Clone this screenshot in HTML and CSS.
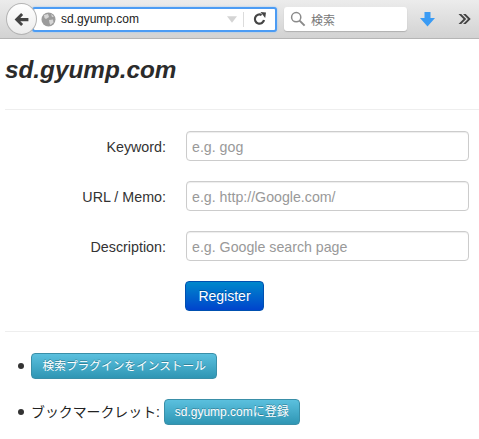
FILE: index.html
```html
<!DOCTYPE html>
<html lang="ja">
<head>
  <meta charset="UTF-8">
  <meta name="viewport" content="width=device-width, initial-scale=1.0">
  <title>sd.gyump.com</title>
  <link rel="stylesheet" href="styles.css">
</head>
<body>
  <div class="toolbar">
    <div class="back-btn">
      <svg width="15" height="13" viewBox="0 0 18 16"><path d="M8.5 0 L0.5 8 L8.5 16 L11 13.5 L7.5 10 H17.5 V6 H7.5 L11 2.5 Z" fill="#444"/></svg>
    </div>
    <div class="url-bar">
      <svg class="globe" width="15" height="15" viewBox="0 0 15 15">
        <circle cx="7.5" cy="7.5" r="7" fill="#9b9b9b"/>
        <path d="M3 3 L7 2 L8 5 L5 7 L3.5 6 Z M8 8 L12 7.5 L12.5 10.5 L9.5 13 L8.5 11 Z M10 2 L13 4.5 L11 5 Z" fill="#d6d6d6"/>
      </svg>
      <span class="url-text">sd.gyump.com</span>
      <svg class="drop" width="10" height="7" viewBox="0 0 12 8"><path d="M0 0 H12 L6 8 Z" fill="#d4d4d4"/></svg>
      <span class="url-sep"></span>
      <svg class="reload" width="14" height="14" viewBox="0 0 14 14">
        <path d="M11 8 A4.6 4.6 0 1 1 8.6 3" fill="none" stroke="#444" stroke-width="2.2"/>
        <path d="M7.5 0 L13 0.6 L12.2 6 Z" fill="#444"/>
      </svg>
    </div>
    <div class="search-bar">
      <svg width="16" height="16" viewBox="0 0 16 16">
        <circle cx="6.2" cy="6.2" r="4.6" fill="none" stroke="#8a8a8a" stroke-width="1.5"/>
        <path d="M9.6 9.6 L14.6 14.6" stroke="#8a8a8a" stroke-width="2"/>
      </svg>
      <span>検索</span>
    </div>
    <svg class="download" width="15" height="15" viewBox="0 0 15 15"><path d="M4.5 0 H10.5 V6 H15 L7.5 14.5 L0 6 H4.5 Z" fill="#3a9bf4"/></svg>
    <svg class="more" width="13" height="10" viewBox="0 0 13 10">
      <path d="M0.5 0 L5.5 5 L0.5 10 H3.2 L8.2 5 L3.2 0 Z M5 0 L10 5 L5 10 H7.7 L12.7 5 L7.7 0 Z" fill="#444"/>
    </svg>
  </div>

  <div class="page">
    <h1>sd.gyump.com</h1>
    <hr>
    <form class="reg-form">
      <div class="form-row">
        <label>Keyword:</label>
        <input type="text" placeholder="e.g. gog">
      </div>
      <div class="form-row">
        <label>URL / Memo:</label>
        <input type="text" placeholder="e.g. http://Google.com/">
      </div>
      <div class="form-row">
        <label>Description:</label>
        <input type="text" placeholder="e.g. Google search page">
      </div>
      <div class="form-actions">
        <button type="button" class="btn btn-primary">Register</button>
      </div>
    </form>
    <hr>
    <ul class="links">
      <li><a class="btn btn-info">検索プラグインをインストール</a></li>
      <li><span class="bm-label">ブックマークレット: </span><a class="btn btn-info btn-latin">sd.gyump.comに登録</a></li>
    </ul>
  </div>
</body>
</html>
```

FILE: styles.css
```css
body {
  font-family: "Liberation Sans", "Noto Sans CJK JP", sans-serif;
  color: #333;
  background-color: #fff;
  margin: 0;
  overflow: hidden;
}

.toolbar {
  height: 38px;
  display: flex;
  align-items: center;
  position: relative;
  background: linear-gradient(#ececec, #d2d2d2);
  border-bottom: 1px solid #b5b5b5;
  padding-left: 32px;
}

.back-btn {
  position: absolute;
  left: 6px;
  top: 3px;
  width: 29px;
  height: 30px;
  border: 1px solid #b4b4b4;
  border-radius: 50%;
  background: linear-gradient(#ffffff, #ececec);
  display: flex;
  align-items: center;
  justify-content: center;
  z-index: 1;
}

.url-bar {
  width: 234px;
  height: 21px;
  background: #fff;
  border: 2px solid #4c9cf4;
  border-radius: 3px;
  box-shadow: 0 0 2px #8fc2f8;
  display: flex;
  align-items: center;
  padding-left: 7px;
}

.globe {
  flex: none;
}

.url-text {
  font-size: 12px;
  color: #222;
  margin-left: 5px;
  flex: 1;
}

.drop {
  flex: none;
}

.url-sep {
  width: 1px;
  height: 15px;
  background: #dcdcdc;
  margin-left: 6px;
}

.reload {
  flex: none;
  margin: 0 8px 0 9px;
}

.search-bar {
  width: 117px;
  height: 24px;
  margin-left: 7px;
  background: #fff;
  border-radius: 3px;
  box-shadow: 0 1px 1px #b0b0b0;
  display: flex;
  align-items: center;
  gap: 5px;
  padding-left: 6px;
  font-size: 12px;
  color: #777;
}

.download {
  margin-left: 13px;
}

.more {
  margin-left: 23px;
}

.page {
  padding: 0 0 0 5px;
}

h1 {
  font-size: 24.3px;
  font-style: italic;
  font-weight: bold;
  color: #2b2b2b;
  line-height: 30px;
  margin: 16px 0 24px;
}

hr {
  height: 1px;
  border: 0;
  background: #eeeeee;
  margin: 0;
}

.reg-form {
  padding-top: 21px;
  padding-bottom: 20px;
}

.form-row {
  display: flex;
  align-items: center;
  margin-bottom: 20px;
}

.form-row label {
  width: 161px;
  text-align: right;
  font-size: 14.3px;
  flex: none;
  padding-top: 1px;
}

.form-row input {
  margin-left: 20px;
  width: 283px;
  height: 30px;
  box-sizing: border-box;
  border: 1px solid #cccccc;
  border-radius: 4px;
  padding: 2px 5px 0;
  font-family: inherit;
  font-size: 14.2px;
  box-shadow: inset 0 1px 1px rgba(0, 0, 0, 0.075);
}

.form-row input::placeholder {
  color: #999;
}

.form-actions {
  padding-left: 180px;
}

.btn {
  display: inline-block;
  box-sizing: border-box;
  border-radius: 4px;
  color: #fff;
  font-family: inherit;
  text-shadow: 0 -1px 0 rgba(0, 0, 0, 0.25);
}

.btn-primary {
  width: 79px;
  height: 30px;
  font-size: 14px;
  padding: 0;
  border: 1px solid #0050b0;
  background: linear-gradient(#0088cc, #0044cc);
}

.links {
  margin: 0;
  padding: 21px 0 0 13px;
  list-style: none;
  font-size: 13.9px;
  color: #222;
}

.links li {
  display: flex;
  align-items: center;
  margin-bottom: 20px;
  height: 26px;
  white-space: pre;
}

.links li::before {
  content: "";
  width: 6px;
  height: 6px;
  border-radius: 50%;
  background: #333;
  margin-right: 7px;
  flex: none;
}

.bm-label {
  margin-bottom: 3px;
}

.btn-info {
  font-size: 11.7px;
  line-height: 24px;
  height: 26px;
  padding: 0 10.5px;
  border: 1px solid #3a8fa8;
  background: linear-gradient(#5bc0de, #2f96b4);
}

.btn-latin {
  font-size: 12px;
  padding: 0 10px;
}
```
